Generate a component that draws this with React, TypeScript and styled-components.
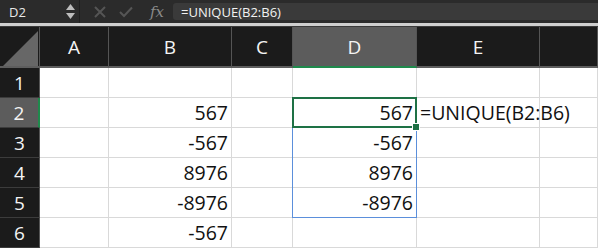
import { Fragment } from "react";
import styled, { createGlobalStyle, css } from "styled-components";

const GlobalStyle = createGlobalStyle`
  html, body {
    margin: 0;
    padding: 0;
    background: #ffffff;
    overflow: hidden;
  }
`;

const Page = styled.div`
  width: 598px;
  height: 250px;
  display: flex;
  flex-direction: column;
  font-family: "Open Sans", "Liberation Sans", sans-serif;
  overflow: hidden;
`;

const FormulaBar = styled.div`
  height: 23px;
  background: #2b2b2b;
  display: flex;
  align-items: center;
  flex-shrink: 0;
`;

const NameBox = styled.div`
  width: 80px;
  height: 100%;
  display: flex;
  align-items: center;
  justify-content: space-between;
  padding: 0 4px 0 9px;
  box-sizing: border-box;
  border-right: 1px solid #1f1f1f;
  color: #e8e8e8;
  font-size: 13px;
`;

const Stepper = styled.div`
  display: flex;
  flex-direction: column;
  gap: 3px;
`;

const BarIcons = styled.div`
  display: flex;
  align-items: center;
  gap: 13px;
  padding: 0 9px 0 14px;
  height: 100%;
`;

const Fx = styled.span`
  font-family: "DejaVu Serif", "Liberation Serif", serif;
  font-style: italic;
  color: #8a8a8a;
  font-size: 15px;
  margin-left: 4px;
`;

const FormulaInput = styled.div`
  flex: 1;
  height: 17px;
  background: #3a3a3a;
  border-radius: 3px 0 0 3px;
  color: #f2f2f2;
  font-size: 13px;
  display: flex;
  align-items: center;
  padding-left: 8px;
`;

const Divider = styled.div`
  height: 3px;
  background: #cfcfcf;
  flex-shrink: 0;
  border-bottom: 1px solid #3a3a3a;
`;

const Sheet = styled.div`
  display: grid;
  grid-template-columns: 40px 69px 123px 61px 124px 123px 1fr;
  grid-template-rows: 41px repeat(6, 30px);
`;

const Corner = styled.div`
  background: #1b1b1b;
  border-right: 1px solid #555;
  border-bottom: 2px solid #5e5e5e;
  box-sizing: border-box;
  display: flex;
  align-items: flex-end;
  justify-content: flex-end;
  padding: 0 1px 0 0;
`;

const ColHead = styled.div<{ $active?: boolean }>`
  background: ${({ $active }) => ($active ? "#5c5c5c" : "#1b1b1b")};
  border-right: 1px solid #555;
  border-bottom: 2px solid ${({ $active }) => ($active ? "#1f8a4c" : "#5e5e5e")};
  box-sizing: border-box;
  color: #f4f4f4;
  font-size: 19px;
  display: flex;
  align-items: center;
  justify-content: center;
`;

const RowHead = styled.div<{ $active?: boolean }>`
  background: ${({ $active }) => ($active ? "#5c5c5c" : "#1b1b1b")};
  border-bottom: 1px solid #3c3c3c;
  border-right: ${({ $active }) => ($active ? "2px solid #1f8a4c" : "1px solid #555")};
  box-sizing: border-box;
  color: #f4f4f4;
  font-size: 19px;
  display: flex;
  align-items: center;
  justify-content: center;
`;

type Spill = "top" | "mid" | "bottom";

const Cell = styled.div<{ $align?: "left" | "right"; $active?: boolean; $spill?: Spill }>`
  position: relative;
  border-right: 1px solid #d9d9d9;
  border-bottom: 1px solid #d9d9d9;
  box-sizing: border-box;
  color: #111;
  font-size: 19.5px;
  display: flex;
  align-items: center;
  justify-content: ${({ $align }) => ($align === "left" ? "flex-start" : "flex-end")};
  padding: 0 3px;
  white-space: nowrap;
  overflow: visible;

  ${({ $active }) =>
    $active &&
    css`
      &::after {
        content: "";
        position: absolute;
        inset: -1px -1px -1px -1px;
        border: 2px solid #1e7145;
        pointer-events: none;
        z-index: 2;
      }
    `}

  ${({ $spill }) =>
    $spill &&
    css`
      &::after {
        content: "";
        position: absolute;
        top: 0;
        left: -1px;
        right: -1px;
        bottom: -1px;
        border-left: 1px solid #5b8fdb;
        border-right: 1px solid #5b8fdb;
        border-bottom: ${$spill === "bottom" ? "1px solid #5b8fdb" : "none"};
        pointer-events: none;
        z-index: 1;
      }
    `}
`;

const FillHandle = styled.span`
  position: absolute;
  right: -4px;
  bottom: -4px;
  width: 6px;
  height: 6px;
  background: #1e7145;
  border: 1px solid #fff;
  z-index: 3;
`;

const columns = ["A", "B", "C", "D", "E", ""];

const rows: [string, string[]][] = [
  ["1", ["", "", "", "", "", ""]],
  ["2", ["", "567", "", "567", "=UNIQUE(B2:B6)", ""]],
  ["3", ["", "-567", "", "-567", "", ""]],
  ["4", ["", "8976", "", "8976", "", ""]],
  ["5", ["", "-8976", "", "-8976", "", ""]],
  ["6", ["", "-567", "", "", "", ""]],
];

const spillFor = (row: string): Spill | undefined =>
  row === "3" ? "top" : row === "4" ? "mid" : row === "5" ? "bottom" : undefined;

const App = () => {
  return (
    <Page>
      <GlobalStyle />
      <FormulaBar>
        <NameBox>
          D2
          <Stepper>
            <svg width="9" height="6" viewBox="0 0 9 6">
              <path d="M4.5 0 L9 6 L0 6 Z" fill="#bdbdbd" />
            </svg>
            <svg width="9" height="6" viewBox="0 0 9 6">
              <path d="M0 0 L9 0 L4.5 6 Z" fill="#bdbdbd" />
            </svg>
          </Stepper>
        </NameBox>
        <BarIcons>
          <svg width="12" height="12" viewBox="0 0 12 12">
            <path d="M1 1 L11 11 M11 1 L1 11" stroke="#555" strokeWidth="2" />
          </svg>
          <svg width="14" height="12" viewBox="0 0 14 12">
            <path d="M1 6 L5 10 L13 1.5" stroke="#555" strokeWidth="2" fill="none" />
          </svg>
          <Fx>fx</Fx>
        </BarIcons>
        <FormulaInput>=UNIQUE(B2:B6)</FormulaInput>
      </FormulaBar>
      <Divider />
      <Sheet>
        <Corner>
          <svg width="35" height="35" viewBox="0 0 35 35">
            <path d="M35 0 L35 35 L0 35 Z" fill="#676767" />
          </svg>
        </Corner>
        {columns.map((c, i) => (
          <ColHead key={i} $active={c === "D"}>
            {c}
          </ColHead>
        ))}
        {rows.map(([n, values]) => (
          <Fragment key={n}>
            <RowHead $active={n === "2"}>{n}</RowHead>
            {values.map((v, i) => {
              const isD = i === 3;
              return (
                <Cell
                  key={i}
                  $align={i === 4 ? "left" : "right"}
                  $active={isD && n === "2"}
                  $spill={isD ? spillFor(n) : undefined}
                >
                  {v}
                  {isD && n === "2" && <FillHandle />}
                </Cell>
              );
            })}
          </Fragment>
        ))}
      </Sheet>
    </Page>
  );
};

export default App;
